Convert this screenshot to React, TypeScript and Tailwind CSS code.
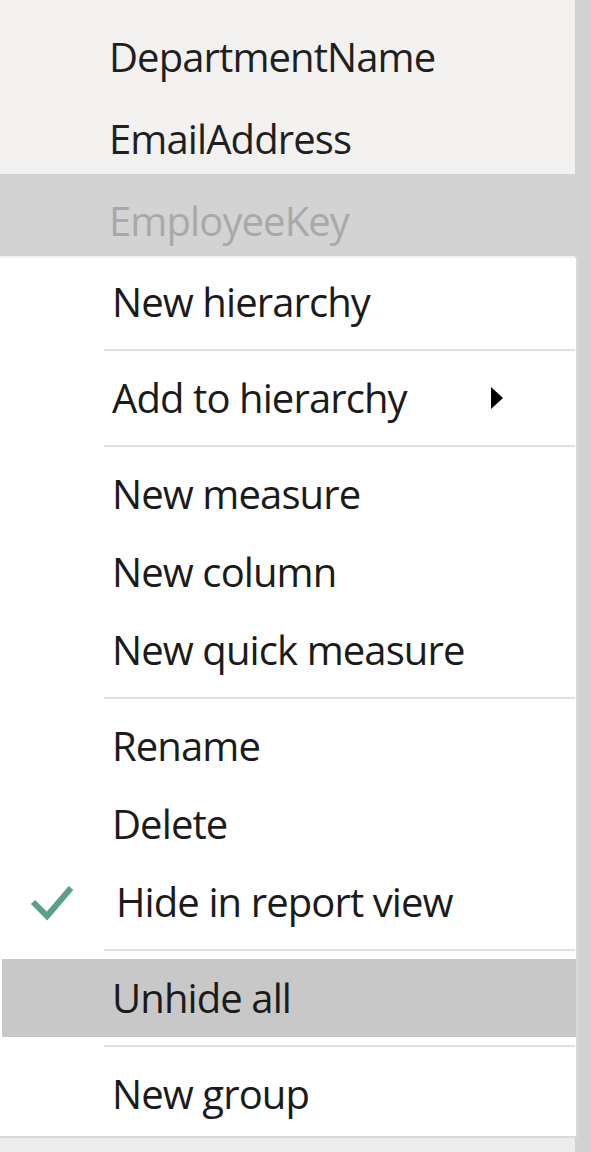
const font = { fontFamily: '"Open Sans", "Noto Sans", sans-serif', letterSpacing: "-0.9px" };

type Item = { label: string; kind?: "item"; submenu?: boolean; checked?: boolean; active?: boolean } | { kind: "sep" };

const menu: Item[] = [
  { label: "New hierarchy" },
  { kind: "sep" },
  { label: "Add to hierarchy", submenu: true },
  { kind: "sep" },
  { label: "New measure" },
  { label: "New column" },
  { label: "New quick measure" },
  { kind: "sep" },
  { label: "Rename" },
  { label: "Delete" },
  { label: "Hide in report view", checked: true },
  { kind: "sep" },
  { label: "Unhide all", active: true },
  { kind: "sep" },
  { label: "New group" },
];

function Check() {
  return (
    <svg width="46" height="40" viewBox="0 0 46 40" className="absolute left-[29px] top-1/2 -translate-y-1/2">
      <path d="M4 20 L18 34 L42 6" fill="none" stroke="#5b9f89" strokeWidth="6" />
    </svg>
  );
}

function ContextMenu() {
  return (
    <div className="absolute left-0 top-[258px] w-[578px] border-r-2 border-b-2 border-[#d9d9d9] bg-white pt-[5px] pb-[3px] text-[#1b1b1b]">
      {menu.map((it, i) => {
        if (it.kind === "sep") {
          return (
            <div key={i} className="flex h-[18px] items-center pl-[104px] pr-[1px]">
              <div className="h-[2px] w-full bg-[#e1e1e1]" />
            </div>
          );
        }
        return (
          <div
            key={i}
            className={`relative flex h-[78px] items-center pr-[1px] ${it.active ? "bg-[#c8c8c8] ml-[2px] pl-[110px]" : "pl-[112px]"}`}
          >
            {it.checked && <Check />}
            <span className={`text-[40px] leading-none ${it.checked ? "ml-[4px]" : ""}`}>{it.label}</span>
            {it.submenu && (
              <svg width="14" height="24" viewBox="0 0 14 24" className="absolute left-[490px] top-1/2 -translate-y-1/2">
                <path d="M1 1 L13 12 L1 23 Z" fill="#000" />
              </svg>
            )}
          </div>
        );
      })}
    </div>
  );
}

export default function App() {
  return (
    <div className="relative flex h-[1152px] w-[591px] overflow-hidden bg-[#d2d2d2]" style={font}>
      <div className="flex w-[575px] flex-col bg-[#f3f1f0] pt-[10px] text-[#1f1f1f]">
        <div className="flex h-[82px] items-center pl-[109px] pt-[12px] text-[40px]">DepartmentName</div>
        <div className="flex h-[82px] items-center pl-[109px] pt-[12px] text-[40px]">EmailAddress</div>
        <div className="flex h-[82px] items-center bg-[#d3d3d3] pl-[109px] pt-[12px] text-[40px] text-[#a9a9a9]">
          EmployeeKey
        </div>
        <div className="flex-1" />
        <div className="h-[20px] bg-[#ececec]" />
      </div>
      <div className="w-[16px] bg-[#d2d2d2]" />
      <ContextMenu />
    </div>
  );
}
